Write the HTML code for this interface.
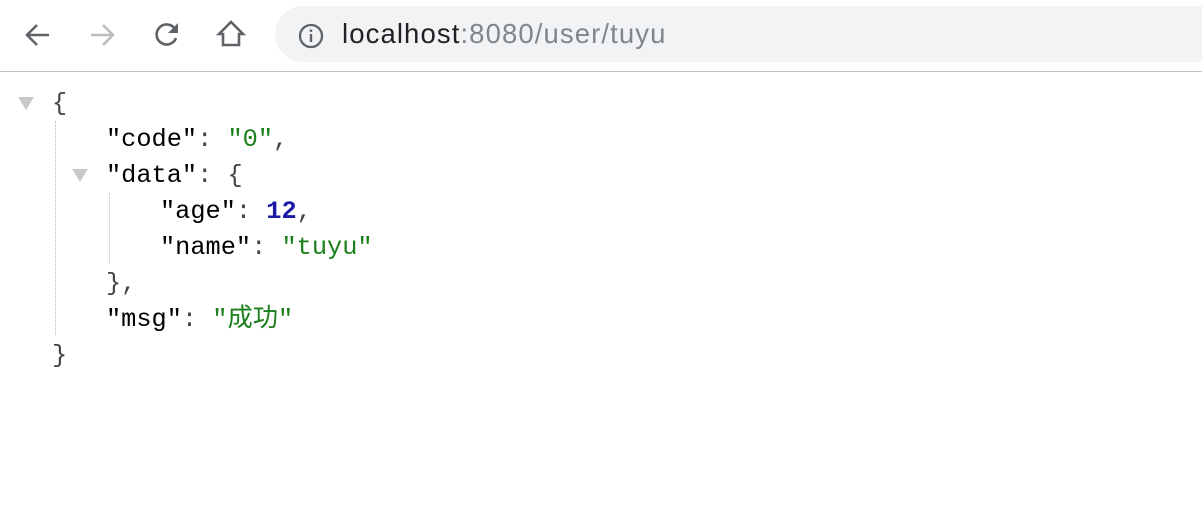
<!DOCTYPE html>
<html><head><meta charset="utf-8"><style>
*{margin:0;padding:0;box-sizing:border-box}
body{width:1202px;height:520px;background:#fff;position:relative;overflow:hidden;font-family:"Liberation Sans",sans-serif}
.bar{position:absolute;left:0;top:0;width:1202px;height:72px;background:#fff;border-bottom:1px solid #c4c4c4}
.omni{position:absolute;left:275px;top:6px;width:960px;height:56px;border-radius:28px;background:#f1f3f4}
.url{position:absolute;left:342px;top:18px;font-size:27.5px;color:#202124;letter-spacing:1.1px}
.url span{color:#80868b}
svg{position:absolute}
.json{position:absolute;left:0;top:86px;font-family:"Liberation Mono","Noto Sans CJK SC",monospace;font-size:25.3px;color:#000}
.l{position:absolute;white-space:pre;height:36px;line-height:36px}
.s{color:#1a7f1a}.n{color:#1a1aa6;font-weight:bold}.p{color:#444}
.tri{position:absolute;width:0;height:0;border-left:8px solid transparent;border-right:8px solid transparent;border-top:13px solid #c8c8c8}
.vl{position:absolute;border-left:1px dotted #bbb;width:0}
</style></head><body>
<div class="bar">
<svg style="left:22px;top:19px" width="32" height="32" viewBox="0 0 32 32"><path d="M27 16H6M15 6L5 16l10 10" stroke="#5f6368" stroke-width="2.6" fill="none"/></svg>
<svg style="left:86px;top:19px" width="32" height="32" viewBox="0 0 32 32"><path d="M5 16h21M17 6l10 10-10 10" stroke="#bdbdbd" stroke-width="2.6" fill="none"/></svg>
<svg style="left:150px;top:17px" width="34" height="34" viewBox="0 0 34 34"><path d="M25 12A10 10 0 1 0 26 21" stroke="#5f6368" stroke-width="2.6" fill="none"/><path d="M28 6v10h-10z" fill="#5f6368"/></svg>
<svg style="left:214px;top:17px" width="34" height="34" viewBox="0 0 34 34"><path d="M5 17L17 5l12 12h-4v11H9V17z" stroke="#5f6368" stroke-width="2.6" fill="none" stroke-linejoin="miter"/></svg>
<div class="omni"></div>
<svg style="left:296px;top:21px" width="30" height="30" viewBox="0 0 30 30"><circle cx="15" cy="15" r="11" stroke="#5f6368" stroke-width="2.3" fill="none"/><rect x="13.8" y="13" width="2.4" height="8" fill="#5f6368"/><rect x="13.8" y="8.5" width="2.4" height="2.4" fill="#5f6368"/></svg>
<div class="url">localhost<span>:8080/user/tuyu</span></div>
</div>
<div class="tri" style="left:18px;top:97px"></div>
<div class="tri" style="left:72px;top:169px"></div>
<div class="vl" style="left:55px;top:121px;height:214px"></div>
<div class="vl" style="left:109px;top:193px;height:70px"></div>
<div class="json">
<div class="l p" style="left:52px;top:0">{</div>
<div class="l" style="left:106px;top:36px">"code"<span class="p">: </span><span class="s">"0"</span><span class="p">,</span></div>
<div class="l" style="left:106px;top:72px">"data"<span class="p">: {</span></div>
<div class="l" style="left:160px;top:108px">"age"<span class="p">: </span><span class="n">12</span><span class="p">,</span></div>
<div class="l" style="left:160px;top:144px">"name"<span class="p">: </span><span class="s">"tuyu"</span></div>
<div class="l p" style="left:106px;top:180px">},</div>
<div class="l" style="left:106px;top:216px">"msg"<span class="p">: </span><span class="s">"成功"</span></div>
<div class="l p" style="left:52px;top:252px">}</div>
</div>
</body></html>
